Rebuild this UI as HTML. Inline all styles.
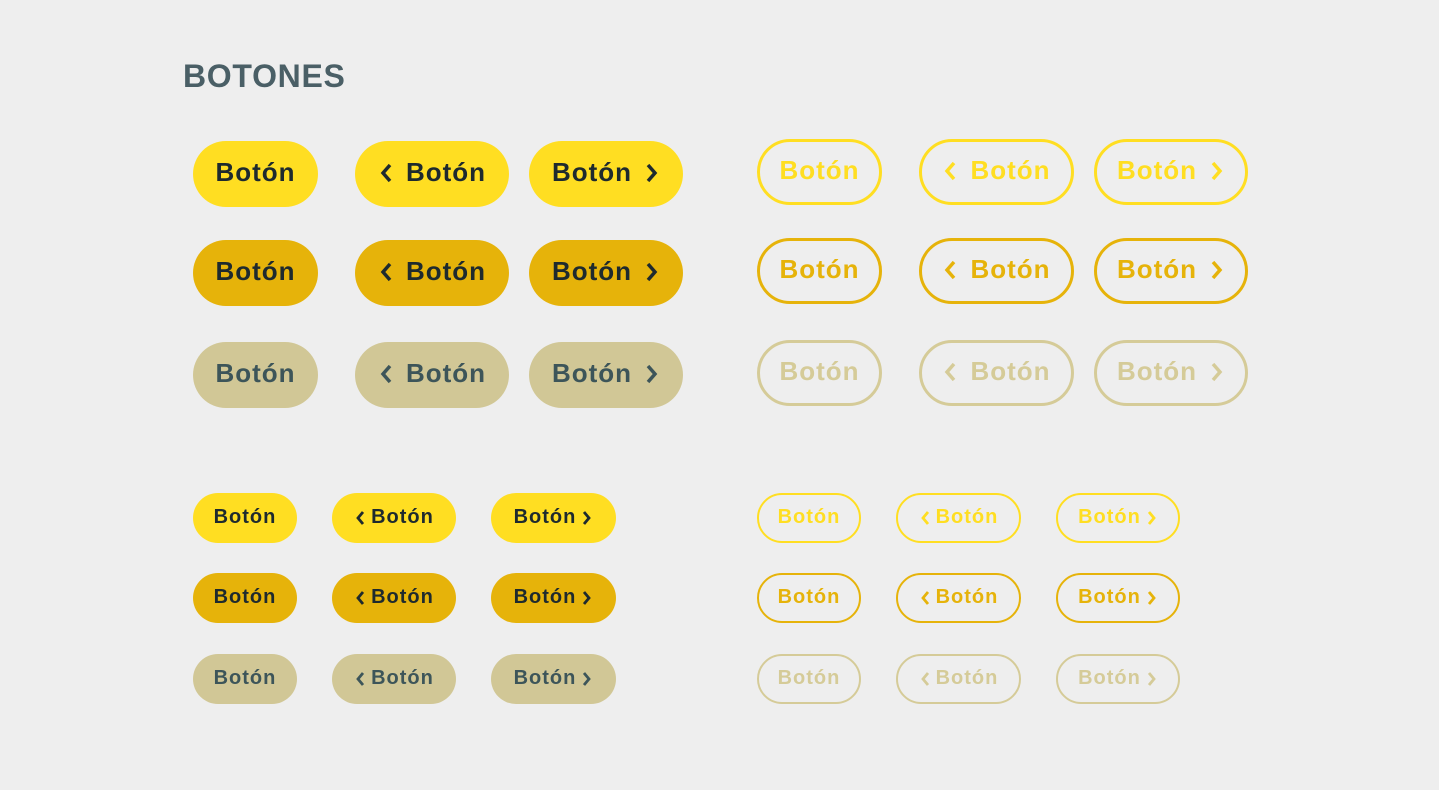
<!DOCTYPE html>
<html><head><meta charset="utf-8"><style>
body{margin:0;width:1439px;height:790px;background:#eeeeee;position:relative;overflow:hidden;font-family:"Liberation Sans",sans-serif}
h1{position:absolute;left:183px;top:58px;margin:0;font-size:32px;font-weight:bold;color:#4a5f66;letter-spacing:0.7px}
.b{position:absolute;box-sizing:border-box;border-radius:40px;display:flex;align-items:center;justify-content:center;font-weight:bold;white-space:nowrap}
.L{height:66px;font-size:26px;letter-spacing:1px;padding-bottom:3px}
.S{height:50px;font-size:20px;letter-spacing:1px;padding-bottom:1px}
.f1{background:#ffde22;color:#1e2a2e}.f2{background:#e6b30a;color:#1e2a2e}.f3{background:#d1c796;color:#3d5559}
.o1{border:3px solid #ffde22;color:#ffde22}.o2{border:3px solid #e6b30a;color:#e6b30a}.o3{border:3px solid #d5cb98;color:#d5cb98}
.S.o1,.S.o2,.S.o3{border-width:2px}
svg{display:block}
.L svg{width:16px;height:24px}.S svg{width:12px;height:18px}
.L .l{margin-right:12px}.L .r{margin-left:12px}
.S .l{margin-right:5px}.S .r{margin-left:5px}
</style></head><body>
<h1>BOTONES</h1>

<div class="b L f1" style="left:193px;top:141px;width:125px">Botón</div>
<div class="b L f1" style="left:355px;top:141px;width:154px"><svg class="l" viewBox="0 0 16 24"><path d="M12 4L5 12L12 20" fill="none" stroke="currentColor" stroke-width="3.5"/></svg>Botón</div>
<div class="b L f1" style="left:529px;top:141px;width:154px">Botón<svg class="r" viewBox="0 0 16 24"><path d="M4 4L11 12L4 20" fill="none" stroke="currentColor" stroke-width="3.5"/></svg></div>
<div class="b L f2" style="left:193px;top:240px;width:125px">Botón</div>
<div class="b L f2" style="left:355px;top:240px;width:154px"><svg class="l" viewBox="0 0 16 24"><path d="M12 4L5 12L12 20" fill="none" stroke="currentColor" stroke-width="3.5"/></svg>Botón</div>
<div class="b L f2" style="left:529px;top:240px;width:154px">Botón<svg class="r" viewBox="0 0 16 24"><path d="M4 4L11 12L4 20" fill="none" stroke="currentColor" stroke-width="3.5"/></svg></div>
<div class="b L f3" style="left:193px;top:342px;width:125px">Botón</div>
<div class="b L f3" style="left:355px;top:342px;width:154px"><svg class="l" viewBox="0 0 16 24"><path d="M12 4L5 12L12 20" fill="none" stroke="currentColor" stroke-width="3.5"/></svg>Botón</div>
<div class="b L f3" style="left:529px;top:342px;width:154px">Botón<svg class="r" viewBox="0 0 16 24"><path d="M4 4L11 12L4 20" fill="none" stroke="currentColor" stroke-width="3.5"/></svg></div>

<div class="b L o1" style="left:757px;top:139px;width:125px">Botón</div>
<div class="b L o1" style="left:919px;top:139px;width:155px"><svg class="l" viewBox="0 0 16 24"><path d="M12 4L5 12L12 20" fill="none" stroke="currentColor" stroke-width="3.5"/></svg>Botón</div>
<div class="b L o1" style="left:1094px;top:139px;width:154px">Botón<svg class="r" viewBox="0 0 16 24"><path d="M4 4L11 12L4 20" fill="none" stroke="currentColor" stroke-width="3.5"/></svg></div>
<div class="b L o2" style="left:757px;top:238px;width:125px">Botón</div>
<div class="b L o2" style="left:919px;top:238px;width:155px"><svg class="l" viewBox="0 0 16 24"><path d="M12 4L5 12L12 20" fill="none" stroke="currentColor" stroke-width="3.5"/></svg>Botón</div>
<div class="b L o2" style="left:1094px;top:238px;width:154px">Botón<svg class="r" viewBox="0 0 16 24"><path d="M4 4L11 12L4 20" fill="none" stroke="currentColor" stroke-width="3.5"/></svg></div>
<div class="b L o3" style="left:757px;top:340px;width:125px">Botón</div>
<div class="b L o3" style="left:919px;top:340px;width:155px"><svg class="l" viewBox="0 0 16 24"><path d="M12 4L5 12L12 20" fill="none" stroke="currentColor" stroke-width="3.5"/></svg>Botón</div>
<div class="b L o3" style="left:1094px;top:340px;width:154px">Botón<svg class="r" viewBox="0 0 16 24"><path d="M4 4L11 12L4 20" fill="none" stroke="currentColor" stroke-width="3.5"/></svg></div>

<div class="b S f1" style="left:193px;top:493px;width:104px">Botón</div>
<div class="b S f1" style="left:332px;top:493px;width:124px"><svg class="l" viewBox="0 0 12 18"><path d="M9 3L4 9L9 15" fill="none" stroke="currentColor" stroke-width="2.8"/></svg>Botón</div>
<div class="b S f1" style="left:491px;top:493px;width:125px">Botón<svg class="r" viewBox="0 0 12 18"><path d="M3 3L8 9L3 15" fill="none" stroke="currentColor" stroke-width="2.8"/></svg></div>
<div class="b S f2" style="left:193px;top:573px;width:104px">Botón</div>
<div class="b S f2" style="left:332px;top:573px;width:124px"><svg class="l" viewBox="0 0 12 18"><path d="M9 3L4 9L9 15" fill="none" stroke="currentColor" stroke-width="2.8"/></svg>Botón</div>
<div class="b S f2" style="left:491px;top:573px;width:125px">Botón<svg class="r" viewBox="0 0 12 18"><path d="M3 3L8 9L3 15" fill="none" stroke="currentColor" stroke-width="2.8"/></svg></div>
<div class="b S f3" style="left:193px;top:654px;width:104px">Botón</div>
<div class="b S f3" style="left:332px;top:654px;width:124px"><svg class="l" viewBox="0 0 12 18"><path d="M9 3L4 9L9 15" fill="none" stroke="currentColor" stroke-width="2.8"/></svg>Botón</div>
<div class="b S f3" style="left:491px;top:654px;width:125px">Botón<svg class="r" viewBox="0 0 12 18"><path d="M3 3L8 9L3 15" fill="none" stroke="currentColor" stroke-width="2.8"/></svg></div>

<div class="b S o1" style="left:757px;top:493px;width:104px">Botón</div>
<div class="b S o1" style="left:896px;top:493px;width:125px"><svg class="l" viewBox="0 0 12 18"><path d="M9 3L4 9L9 15" fill="none" stroke="currentColor" stroke-width="2.8"/></svg>Botón</div>
<div class="b S o1" style="left:1056px;top:493px;width:124px">Botón<svg class="r" viewBox="0 0 12 18"><path d="M3 3L8 9L3 15" fill="none" stroke="currentColor" stroke-width="2.8"/></svg></div>
<div class="b S o2" style="left:757px;top:573px;width:104px">Botón</div>
<div class="b S o2" style="left:896px;top:573px;width:125px"><svg class="l" viewBox="0 0 12 18"><path d="M9 3L4 9L9 15" fill="none" stroke="currentColor" stroke-width="2.8"/></svg>Botón</div>
<div class="b S o2" style="left:1056px;top:573px;width:124px">Botón<svg class="r" viewBox="0 0 12 18"><path d="M3 3L8 9L3 15" fill="none" stroke="currentColor" stroke-width="2.8"/></svg></div>
<div class="b S o3" style="left:757px;top:654px;width:104px">Botón</div>
<div class="b S o3" style="left:896px;top:654px;width:125px"><svg class="l" viewBox="0 0 12 18"><path d="M9 3L4 9L9 15" fill="none" stroke="currentColor" stroke-width="2.8"/></svg>Botón</div>
<div class="b S o3" style="left:1056px;top:654px;width:124px">Botón<svg class="r" viewBox="0 0 12 18"><path d="M3 3L8 9L3 15" fill="none" stroke="currentColor" stroke-width="2.8"/></svg></div>
</body></html>
